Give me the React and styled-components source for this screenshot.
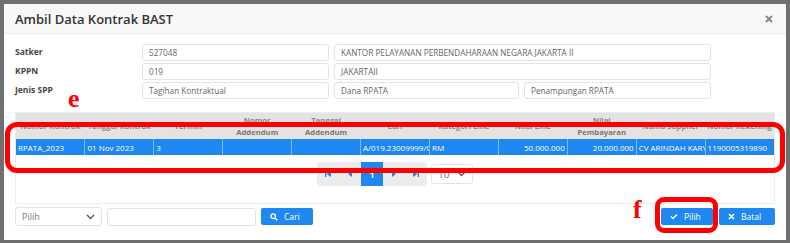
import React from 'react'
import styled, { createGlobalStyle } from 'styled-components'

const GlobalStyle = createGlobalStyle`
    html, body {
        margin: 0;
        padding: 0;
        background: #6f6f6f;
    }
    body {
        font-family: "Open Sans", "Noto Sans", sans-serif;
        color: #666;
    }
`

const blue = '#1e87f0'

const columns = [
    {title: 'Nomor Kontrak'},
    {title: 'Tanggal Kontrak'},
    {title: 'Termin'},
    {title: 'Nomor', sub: 'Addendum'},
    {title: 'Tanggal', sub: 'Addendum'},
    {title: 'Cari'},
    {title: 'Kategori Line'},
    {title: 'Nilai Line'},
    {title: 'Nilai', sub: 'Pembayaran'},
    {title: 'Nama Supplier'},
    {title: 'Nomor Rekening'},
]

const row = [
    {v: 'RPATA_2023'},
    {v: '01 Nov 2023'},
    {v: '3'},
    {v: ''},
    {v: ''},
    {v: 'A/019.23009999/0/RM'},
    {v: 'RM'},
    {v: '50.000.000', right: true},
    {v: '20.000.000', right: true},
    {v: 'CV ARINDAH KARYA'},
    {v: '1190005319890'},
]

const Chevron = () => (
    <svg width="9" height="6" viewBox="0 0 9 6">
        <polyline points="1,1 4.5,4.5 8,1" fill="none" stroke="#555" strokeWidth="1.3" />
    </svg>
)

const PagerIcon = ({type}) => {
    const shapes = {
        first: <><rect x="0" y="0" width="1.2" height="6" /><polygon points="6,0 1.5,3 6,6" /></>,
        prev: <polygon points="5,0 1,3 5,6" />,
        next: <polygon points="1,0 5,3 1,6" />,
        last: <><polygon points="0,0 4.5,3 0,6" /><rect x="4.8" y="0" width="1.2" height="6" /></>,
    }
    return (
        <svg width="6" height="6" viewBox="0 0 6 6" fill={blue}>{shapes[type]}</svg>
    )
}

export default function App() {
    return (
        <>
            <GlobalStyle />
            <Overlay>
                <Modal>
                    <Header>
                        <Title>Ambil Data Kontrak BAST</Title>
                        <Close>
                            <svg width="8" height="8" viewBox="0 0 8 8">
                                <path d="M1 1L7 7M7 1L1 7" stroke="#888" strokeWidth="1.8" />
                            </svg>
                        </Close>
                    </Header>
                    <Body>
                        <Form>
                            <Label>Satker</Label>
                            <Input>527048</Input>
                            <Input $span={2}>KANTOR PELAYANAN PERBENDAHARAAN NEGARA JAKARTA II</Input>
                            <Label>KPPN</Label>
                            <Input>019</Input>
                            <Input $span={2}>JAKARTAII</Input>
                            <Label>Jenis SPP</Label>
                            <Input>Tagihan Kontraktual</Input>
                            <Input>Dana RPATA</Input>
                            <Input>Penampungan RPATA</Input>
                        </Form>

                        <Panel>
                            <Table>
                                <thead>
                                    <tr>
                                        {columns.map((c, i) => (
                                            <Th key={i}>
                                                {c.sub ? <><Faint>{c.title}</Faint><br />{c.sub}</> : <Faint>{c.title}</Faint>}
                                            </Th>
                                        ))}
                                    </tr>
                                </thead>
                                <tbody>
                                    <tr>
                                        {row.map((c, i) => (
                                            <Td key={i} $right={c.right}>{c.v}</Td>
                                        ))}
                                    </tr>
                                </tbody>
                            </Table>
                            <PagerRow>
                                <Pager>
                                    <PageBtn><PagerIcon type="first" /></PageBtn>
                                    <PageBtn><PagerIcon type="prev" /></PageBtn>
                                    <PageBtn $active>1</PageBtn>
                                    <PageBtn><PagerIcon type="next" /></PageBtn>
                                    <PageBtn><PagerIcon type="last" /></PageBtn>
                                </Pager>
                                <PageSize>10 <Chevron /></PageSize>
                            </PagerRow>
                        </Panel>

                        <Footer>
                            <Search>
                                <Select>Pilih <Chevron /></Select>
                                <SearchInput />
                                <Button $w={52}>
                                    <svg width="8" height="8" viewBox="0 0 8 8">
                                        <circle cx="3.2" cy="3.2" r="2.3" fill="none" stroke="#fff" strokeWidth="1.3" />
                                        <path d="M5 5L7.3 7.3" stroke="#fff" strokeWidth="1.6" />
                                    </svg>
                                    Cari
                                </Button>
                            </Search>
                            <Actions>
                                <Button $w={52}>
                                    <svg width="8" height="7" viewBox="0 0 8 7">
                                        <polyline points="1,3.5 3,5.5 7,1.5" fill="none" stroke="#fff" strokeWidth="1.4" />
                                    </svg>
                                    Pilih
                                </Button>
                                <Button $w={56}>
                                    <svg width="7" height="7" viewBox="0 0 7 7">
                                        <path d="M1 1L6 6M6 1L1 6" stroke="#fff" strokeWidth="1.6" />
                                    </svg>
                                    Batal
                                </Button>
                            </Actions>
                        </Footer>
                    </Body>

                    <Marker $x={64} $y={82}>e</Marker>
                    <Highlight $x={1} $y={118} $w={780} $h={51} $r={12} />
                    <Marker $x={629} $y={193}>f</Marker>
                    <Highlight $x={651} $y={193} $w={63} $h={36} $r={9} />
                </Modal>
            </Overlay>
        </>
    )
}

const Overlay = styled.div`
    width: 790px;
    height: 243px;
    box-sizing: border-box;
    padding: 4px 4px 3px 4px;
`

const Modal = styled.div`
    position: relative;
    width: 782px;
    height: 236px;
    background: #fff;
    display: flex;
    flex-direction: column;
`

const Header = styled.div`
    display: flex;
    align-items: center;
    justify-content: space-between;
    height: 29px;
    padding: 0 11px;
    background: #f8f8f8;
    border-bottom: 1px solid #ececec;
`

const Title = styled.h2`
    margin: 0;
    font-size: 13px;
    font-weight: 600;
    color: #333;
`

const Close = styled.span`
    display: flex;
    margin-right: 2px;
`

const Body = styled.div`
    padding: 10px 11px 0 11px;
    display: flex;
    flex-direction: column;
`

const Form = styled.div`
    display: grid;
    grid-template-columns: 122px 187px 185px 187px;
    column-gap: 5px;
    row-gap: 2px;
    align-items: start;
`

const Label = styled.div`
    font-size: 8.5px;
    font-weight: 700;
    color: #444;
    margin-top: 2px;
`

const Input = styled.div`
    grid-column: span ${p => p.$span || 1};
    height: 17px;
    box-sizing: border-box;
    border: 1px solid #e3e3e3;
    border-radius: 3px;
    padding: 0 6px;
    font-size: 8.2px;
    line-height: 15px;
    color: #666;
    white-space: nowrap;
`

const Panel = styled.div`
    margin-top: 13px;
    border: 1px solid #ececec;
    height: 92px;
    box-sizing: border-box;
`

const Table = styled.table`
    width: 100%;
    border-collapse: collapse;
    table-layout: fixed;
`

const Th = styled.th`
    background: #e3e3e3;
    height: 26px;
    padding: 0 2px;
    font-size: 7.7px;
    font-weight: 700;
    color: #777;
    line-height: 12px;
    text-align: center;
    vertical-align: middle;
    white-space: nowrap;
    overflow: hidden;
`

const Faint = styled.span`
    color: #8a8a8a;
`

const Td = styled.td`
    background: ${blue};
    color: #fff;
    height: 16px;
    padding: 0 2px;
    font-size: 8px;
    border: 1px solid #7fb6f3;
    border-top: none;
    border-bottom: none;
    white-space: nowrap;
    overflow: hidden;
    text-align: ${p => (p.$right ? 'right' : 'left')};
    &:first-child { border-left: none; }
    &:last-child { border-right: none; }
`

const PagerRow = styled.div`
    display: flex;
    justify-content: center;
    align-items: center;
    gap: 4px;
    margin-top: 7px;
`

const Pager = styled.div`
    display: flex;
    background: #ececec;
    border-radius: 3px;
    height: 24px;
    overflow: hidden;
`

const PageBtn = styled.div`
    width: 22px;
    display: flex;
    align-items: center;
    justify-content: center;
    font-size: 8px;
    font-weight: 700;
    color: #fff;
    background: ${p => (p.$active ? blue : 'transparent')};
`

const PageSize = styled.div`
    width: 42px;
    height: 20px;
    box-sizing: border-box;
    border: 1px solid #e3e3e3;
    border-radius: 3px;
    display: flex;
    align-items: center;
    justify-content: space-between;
    padding: 0 6px;
    font-size: 10px;
    color: #777;
`

const Footer = styled.div`
    display: flex;
    justify-content: space-between;
    align-items: center;
    margin-top: 3px;
`

const Search = styled.div`
    display: flex;
    align-items: center;
    gap: 5px;
`

const Select = styled.div`
    width: 87px;
    height: 19px;
    box-sizing: border-box;
    border: 1px solid #e3e3e3;
    border-radius: 3px;
    display: flex;
    align-items: center;
    justify-content: space-between;
    padding: 0 6px;
    font-size: 9px;
    color: #777;
`

const SearchInput = styled.div`
    width: 149px;
    height: 18px;
    box-sizing: border-box;
    border: 1px solid #e3e3e3;
    border-radius: 3px;
`

const Actions = styled.div`
    display: flex;
    gap: 6px;
`

const Button = styled.div`
    width: ${p => p.$w}px;
    height: 17px;
    box-sizing: border-box;
    background: ${blue};
    border-radius: 2px;
    display: flex;
    align-items: center;
    gap: 6px;
    padding-left: 9px;
    font-size: 8.5px;
    color: #fff;
`

const Marker = styled.span`
    position: absolute;
    left: ${p => p.$x}px;
    top: ${p => p.$y}px;
    font-family: "Liberation Serif", serif;
    font-weight: 700;
    font-size: 26px;
    color: #f00;
    line-height: 1;
`

const Highlight = styled.div`
    position: absolute;
    left: ${p => p.$x}px;
    top: ${p => p.$y}px;
    width: ${p => p.$w}px;
    height: ${p => p.$h}px;
    box-sizing: border-box;
    border: 5px solid #f00;
    border-radius: ${p => p.$r}px;
`
